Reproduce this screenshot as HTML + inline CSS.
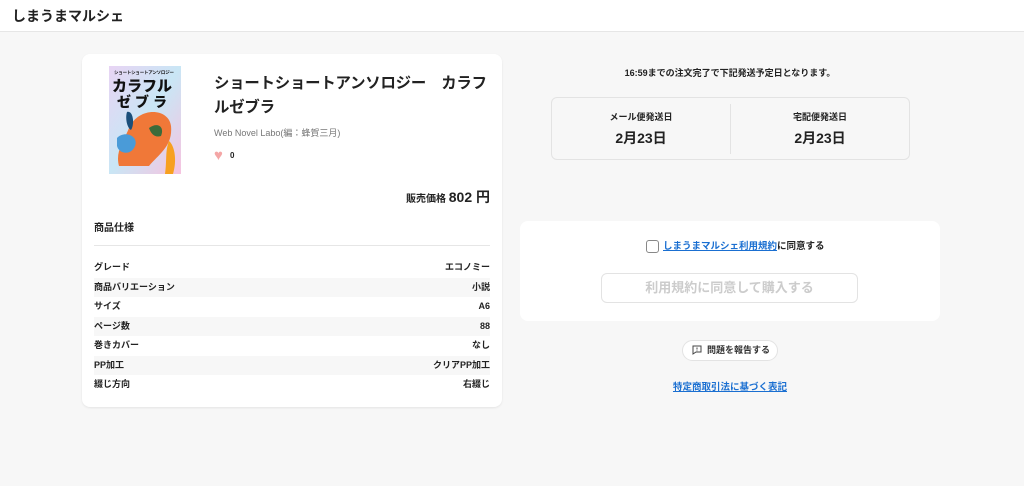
<!DOCTYPE html>
<html><head><meta charset="utf-8"><style>
*{box-sizing:border-box;margin:0;padding:0}
body{width:1024px;height:486px;background:#f7f7f7;font-family:"Liberation Sans","Noto Sans CJK JP",sans-serif;color:#222;position:relative;overflow:hidden}
.hdr{position:absolute;left:0;top:0;width:1024px;height:32px;background:#fff;border-bottom:1px solid #e6e6e6}
.hdr b{position:absolute;left:12px;top:6px;font-size:14px}
.card{position:absolute;background:#fff;border-radius:8px;box-shadow:0 1px 2px rgba(0,0,0,.08)}
.abs{position:absolute}
.row{position:absolute;left:94px;width:396px;height:19.5px;font-size:9px;font-weight:bold;line-height:19.5px}
.row span{position:absolute;right:0;top:0}
.alt{background:#f7f7f7}
</style></head><body>
<div class="hdr"><b>しまうまマルシェ</b></div>
<div class="card" style="left:82px;top:54px;width:420px;height:353px"></div>
<svg class="abs" style="left:109px;top:66px" width="72" height="108" viewBox="0 0 72 108">
<defs><linearGradient id="g" x1="0" y1="0" x2="1" y2="1"><stop offset="0" stop-color="#e8d4f4"/><stop offset=".5" stop-color="#c9e6f5"/><stop offset="1" stop-color="#f6c3e0"/></linearGradient></defs>
<rect width="72" height="108" fill="url(#g)"/>
<text x="5" y="8" font-size="4.5" font-weight="bold" fill="#111" font-family="Liberation Sans,Noto Sans CJK JP,sans-serif" textLength="60">ショートショートアンソロジー</text>
<text x="3" y="25" font-size="15" font-weight="900" fill="#111" font-family="Liberation Sans,Noto Sans CJK JP,sans-serif" textLength="60">カラフル</text>
<text x="8" y="41" font-size="14" font-weight="900" fill="#111" font-family="Liberation Sans,Noto Sans CJK JP,sans-serif" textLength="50">ゼブラ</text>
<path d="M20 62 C30 40 60 42 62 60 C64 80 50 88 40 100 L10 100 C6 85 15 75 20 62Z" fill="#f07838"/>
<path d="M18 46 C24 44 26 58 22 64 C18 62 16 52 18 46Z" fill="#1b4f7a"/>
<path d="M40 62 C48 56 56 60 52 70 C46 72 42 68 40 62Z" fill="#3b6b3a"/>
<path d="M8 72 C16 64 30 70 26 80 C22 90 10 88 8 80Z" fill="#4a9bd8"/>
<path d="M60 75 C66 80 68 95 64 108 L56 108 C58 95 56 85 60 75Z" fill="#f7a020"/>
</svg>
<div class="abs" style="left:214px;top:72px;font-size:15.4px;font-weight:bold;line-height:24px;width:275px;letter-spacing:-0.2px">ショートショートアンソロジー　カラフルゼブラ</div>
<div class="abs" style="left:214px;top:126px;font-size:9px;color:#777">Web Novel Labo(編：蜂賀三月)</div>
<div class="abs" style="left:214px;top:148px;font-size:15px;color:#f4a6a6;line-height:15px">♥</div>
<div class="abs" style="left:230px;top:151px;font-size:8px;font-weight:bold">0</div>
<div class="abs" style="left:300px;top:187px;width:190px;text-align:right;font-size:10px;font-weight:bold">販売価格 <span style="font-size:14px">802 円</span></div>
<div class="abs" style="left:94px;top:219px;font-size:10px;font-weight:bold">商品仕様</div>
<div class="abs" style="left:94px;top:245px;width:396px;height:1px;background:#e6e6e6"></div>
<div class="row" style="top:258px">グレード<span>エコノミー</span></div>
<div class="row alt" style="top:277.5px">商品バリエーション<span>小説</span></div>
<div class="row" style="top:297px">サイズ<span>A6</span></div>
<div class="row alt" style="top:316.5px">ページ数<span>88</span></div>
<div class="row" style="top:336px">巻きカバー<span>なし</span></div>
<div class="row alt" style="top:355.5px">PP加工<span>クリアPP加工</span></div>
<div class="row" style="top:375px">綴じ方向<span>右綴じ</span></div>

<div class="abs" style="left:520px;top:66px;width:420px;text-align:center;font-size:9px;font-weight:bold">16:59までの注文完了で下記発送予定日となります。</div>
<div class="abs" style="left:551px;top:97px;width:359px;height:63px;border:1px solid #e3e3e3;border-radius:6px;background:#f7f7f7"></div>
<div class="abs" style="left:730px;top:104px;width:1px;height:50px;background:#e3e3e3"></div>
<div class="abs" style="left:551px;top:110px;width:180px;text-align:center;font-size:9px;font-weight:bold">メール便発送日</div>
<div class="abs" style="left:551px;top:128px;width:180px;text-align:center;font-size:14px;font-weight:bold">2月23日</div>
<div class="abs" style="left:730px;top:110px;width:180px;text-align:center;font-size:9px;font-weight:bold">宅配便発送日</div>
<div class="abs" style="left:730px;top:128px;width:180px;text-align:center;font-size:14px;font-weight:bold">2月23日</div>

<div class="card" style="left:520px;top:221px;width:420px;height:100px;box-shadow:none"></div>
<div class="abs" style="left:646px;top:240px;width:13px;height:13px;border:1.5px solid #888;border-radius:3px;background:#fff"></div>
<div class="abs" style="left:663px;top:240px;font-size:9.5px;font-weight:bold;line-height:13px"><span style="color:#1a6fd1;text-decoration:underline">しまうまマルシェ利用規約</span>に同意する</div>
<div class="abs" style="left:601px;top:273px;width:257px;height:30px;border:1px solid #e3e3e3;border-radius:6px;text-align:center;line-height:28px;font-size:13px;font-weight:bold;color:#ccc">利用規約に同意して購入する</div>
<div class="abs" style="left:682px;top:340px;width:96px;height:21px;border:1px solid #e3e3e3;border-radius:11px;background:#fff;font-size:9px;font-weight:bold;line-height:19px;padding-left:24px;color:#333">問題を報告する</div>
<svg class="abs" style="left:692px;top:345px" width="10" height="10" viewBox="0 0 10 10"><path d="M1 1h8v6H4L1 9z" fill="none" stroke="#444" stroke-width="1"/><path d="M5 2.5v2M5 5.5v.6" stroke="#444"/></svg>
<div class="abs" style="left:520px;top:379px;width:420px;text-align:center;font-size:9.5px;font-weight:bold;color:#1a6fd1;text-decoration:underline">特定商取引法に基づく表記</div>
</body></html>
